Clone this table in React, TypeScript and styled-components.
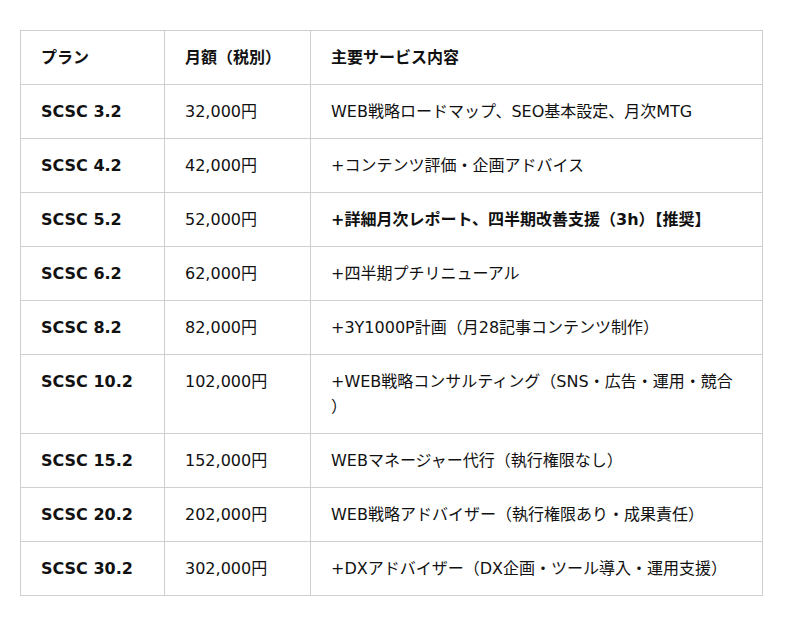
import React from "react";
import styled, { createGlobalStyle } from "styled-components";

const GlobalStyle = createGlobalStyle`
  html, body {
    margin: 0;
    padding: 0;
    background: #ffffff;
  }
  body {
    font-family: "DejaVu Sans", "Noto Sans CJK JP", sans-serif;
    color: #111111;
  }
`;

const Page = styled.div`
  padding: 30px 20px 30px 20px;
`;

const Table = styled.table`
  width: 742px;
  border-collapse: collapse;
  table-layout: fixed;
  font-size: 16px;
  line-height: 25px;
`;

const Col = styled.col<{ $w: number }>`
  width: ${(p) => p.$w}px;
`;

const HeadCell = styled.th`
  text-align: left;
  font-weight: bold;
  padding: 14px 24px 14px 20px;
  border: 1px solid #cfcfcf;
  vertical-align: top;
`;

const Cell = styled.td<{ $bold?: boolean }>`
  padding: 14px 24px 14px 20px;
  border: 1px solid #cfcfcf;
  vertical-align: top;
  line-break: anywhere;
  font-weight: ${(p) => (p.$bold ? "bold" : "normal")};
`;

const rows: { plan: string; price: string; desc: string; strong?: boolean }[] = [
  { plan: "SCSC 3.2", price: "32,000円", desc: "WEB戦略ロードマップ、SEO基本設定、月次MTG" },
  { plan: "SCSC 4.2", price: "42,000円", desc: "+コンテンツ評価・企画アドバイス" },
  { plan: "SCSC 5.2", price: "52,000円", desc: "+詳細月次レポート、四半期改善支援（3h）【推奨】", strong: true },
  { plan: "SCSC 6.2", price: "62,000円", desc: "+四半期プチリニューアル" },
  { plan: "SCSC 8.2", price: "82,000円", desc: "+3Y1000P計画（月28記事コンテンツ制作）" },
  { plan: "SCSC 10.2", price: "102,000円", desc: "+WEB戦略コンサルティング（SNS・広告・運用・競合）" },
  { plan: "SCSC 15.2", price: "152,000円", desc: "WEBマネージャー代行（執行権限なし）" },
  { plan: "SCSC 20.2", price: "202,000円", desc: "WEB戦略アドバイザー（執行権限あり・成果責任）" },
  { plan: "SCSC 30.2", price: "302,000円", desc: "+DXアドバイザー（DX企画・ツール導入・運用支援）" },
];

export default function App() {
  return (
    <>
      <GlobalStyle />
      <Page>
        <Table>
          <colgroup>
            <Col $w={144} />
            <Col $w={146} />
            <Col $w={452} />
          </colgroup>
          <thead>
            <tr>
              <HeadCell>プラン</HeadCell>
              <HeadCell>月額（税別）</HeadCell>
              <HeadCell>主要サービス内容</HeadCell>
            </tr>
          </thead>
          <tbody>
            {rows.map((r) => (
              <tr key={r.plan}>
                <Cell $bold>{r.plan}</Cell>
                <Cell>{r.price}</Cell>
                <Cell $bold={r.strong}>{r.desc}</Cell>
              </tr>
            ))}
          </tbody>
        </Table>
      </Page>
    </>
  );
}
